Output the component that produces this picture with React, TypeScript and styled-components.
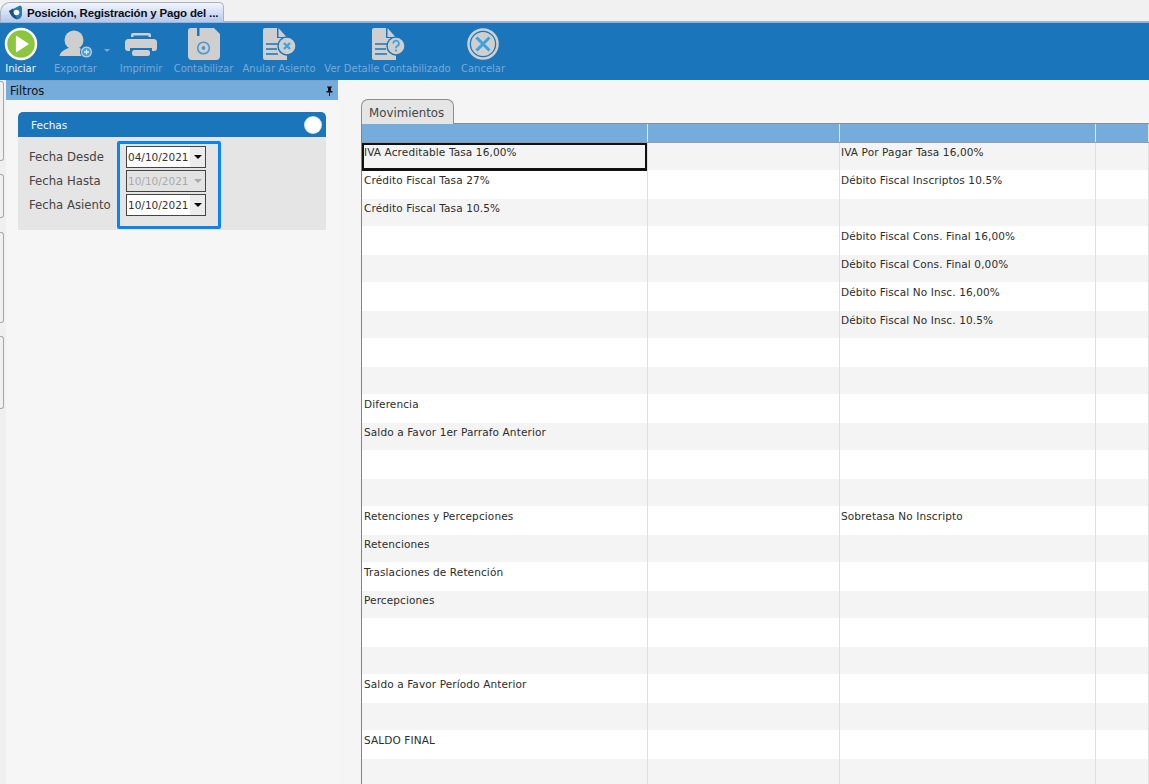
import React from "react";
import styled, { createGlobalStyle } from "styled-components";

const Global = createGlobalStyle`
  html, body { margin: 0; padding: 0; background: #f5f5f5; }
  * { box-sizing: border-box; }
  body { font-family: "DejaVu Sans", "Liberation Sans", sans-serif; }
`;

const Page = styled.div`
  width: 1149px; height: 784px; overflow: hidden; display: flex; flex-direction: column; background: #f5f5f5;
`;
const TabStrip = styled.div`
  height: 23px; flex: none; background: #f1f1f1; display: flex; align-items: flex-end;
  border-bottom: 2px solid #9fb0d6;
`;
const WindowTab = styled.div`
  width: 224px; height: 20px; margin-bottom: -1px; display: flex; align-items: center; gap: 4px; padding-left: 7px;
  background: linear-gradient(#f2f6fc, #b4c8ec);
  border: 1px solid #a9b2c2; border-bottom: none; border-radius: 10px 5px 0 0;
  svg { flex: none; }
`;
const WindowTitle = styled.span`
  font: bold 11.5px "Liberation Sans", sans-serif; color: #0c0c14; white-space: nowrap; letter-spacing: -0.17px;
`;
const Toolbar = styled.div`
  height: 57px; flex: none; background: #1b75bb; display: flex;
`;
const ToolButton = styled.div<{ $w: number; $on?: boolean }>`
  width: ${p => p.$w}px; flex: none; position: relative; display: flex; flex-direction: column; align-items: center;
  padding-top: 4px; color: ${p => (p.$on ? "#f2f6fa" : "#78aad6")}; font-size: 10px; line-height: 12px; white-space: nowrap;
  svg { display: block; margin-bottom: 2px; }
`;
const Caret = styled.span`
  position: absolute; right: 0; top: 26px; width: 0; height: 0;
  border-left: 3px solid transparent; border-right: 3px solid transparent; border-top: 3px solid #78aad6;
`;
const Body = styled.div`
  flex: 1; display: flex; min-height: 0;
`;
const SideRail = styled.div`
  width: 6px; flex: none; background: #f0f0f0; padding-top: 1px; display: flex; flex-direction: column;
`;
const RailTab = styled.div<{ $h: number; $gap: number }>`
  width: 4px; height: ${p => p.$h}px; margin-bottom: ${p => p.$gap}px;
  border: 1px solid #a8a8a8; border-left: none; border-radius: 0 3px 3px 0;
`;
const FilterPane = styled.div`
  width: 332px; flex: none; background: #f6f6f6; display: flex; flex-direction: column;
`;
const PaneHeader = styled.div`
  height: 20px; background: #75acdb; display: flex; align-items: center; justify-content: space-between;
  padding: 0 4px; font-size: 11.5px; color: #111; border-top: 1px solid #8c9fb0;
`;
const Card = styled.div`
  margin: 12px 12px 0; width: 308px;
`;
const CardHead = styled.div`
  height: 25px; background: #1b75bb; border-radius: 5px 5px 0 0; color: #f4f8fb; font-size: 10.5px;
  display: flex; align-items: center; justify-content: space-between; padding: 0 5px 0 13px;
`;
const Dot = styled.span`
  width: 16px; height: 16px; border-radius: 50%; background: #fff; box-shadow: 0 0 0 1px #d6e4f1;
`;
const CardBody = styled.div`
  height: 93px; background: #e5e5e5; display: flex; padding: 4px 0 1px 11px;
`;
const Labels = styled.div`
  width: 88px; padding-top: 7px; display: flex; flex-direction: column; gap: 6px;
`;
const FieldLabel = styled.div`
  height: 18px; line-height: 18px; font-size: 11.7px; color: #444; white-space: nowrap;
`;
const FocusBox = styled.div`
  width: 104px; height: 88px; border: 3px solid #0a84f5; border-radius: 2px; padding: 2px 0 0 6px;
  display: flex; flex-direction: column; gap: 2px;
`;
const DateInput = styled.div<{ $off?: boolean }>`
  width: 80px; height: 22px; border: 1px solid #444; display: flex; align-items: center; padding-left: 1px;
  font-size: 10.5px; background: ${p => (p.$off ? "#e3e3e3" : "#fff")}; color: ${p => (p.$off ? "#a9a9a9" : "#333")};
`;
const DateText = styled.span` flex: 1; `;
const DateArrow = styled.span<{ $off?: boolean }>`
  width: 15px; height: 20px; display: flex; align-items: center; justify-content: center;
  background: ${p => (p.$off ? "#e3e3e3" : "#ececec")};
  &::after { content: ""; border-left: 4px solid transparent; border-right: 4px solid transparent;
    border-top: 4px solid ${p => (p.$off ? "#aaa" : "#000")}; }
`;
const Main = styled.div`
  flex: 1; min-width: 0; display: flex; flex-direction: column; padding: 19px 0 0 23px;
`;
const TabBar = styled.div` height: 24px; flex: none; display: flex; `;
const SheetTab = styled.div`
  width: 93px; height: 25px; background: #e5e5e5; border: 1px solid #8d8d8d; border-bottom: none; border-radius: 7px 7px 0 0;
  padding-left: 7px; line-height: 26px; font-size: 11.8px; color: #444; position: relative; z-index: 1;
`;
const Grid = styled.div`
  flex: 1; border-top: 1px solid #8d8d8d; border-left: 1px solid #7d8590; overflow: hidden; width: 788px;
`;
const HeadRow = styled.div`
  height: 19px; display: grid; grid-template-columns: 286px 192px 256px 1fr; background: #75acdb; border-bottom: 1px solid #8d9baa;
`;
const HeadCell = styled.div` border-right: 1px solid #dfe8f0; `;
const Row = styled.div<{ $white: boolean }>`
  height: ${p => (p.$white ? 29 : 27)}px; display: grid; grid-template-columns: 286px 192px 256px 1fr;
  background: ${p => (p.$white ? "#fff" : "#f4f4f4")};
`;
const Cell = styled.div<{ $white: boolean; $selected?: boolean; $inset?: number }>`
  border-right: 1px solid #dedede; font-size: 10.5px; color: #2c2c2c; line-height: 18px;
  padding: ${p => (p.$white ? 1 : 0)}px 0 0 ${p => p.$inset ?? 2}px;
  white-space: nowrap; letter-spacing: 0.12px;
  ${p => p.$selected && `box-shadow: inset 0 2px 0 #111, inset 2px 0 0 #111, inset -2px 0 0 #111, inset 0 -3px 0 #111; height: 28px; position: relative;`}
`;

const D = "#cfcfcf";
const A = "#3ba3dd";
const Bg = "#1b75bb";

const IconPlay = () => (
  <svg width="34" height="34" viewBox="0 0 34 34">
    <circle cx="17" cy="17" r="15" fill="#8cc63f" stroke="#fff" strokeWidth="2.5" />
    <path d="M12.5 9.5 L24 17 L12.5 24.5 Z" fill="#fff" stroke="#fff" strokeWidth="1.2" strokeLinejoin="round" />
  </svg>
);
const IconUser = () => (
  <svg width="34" height="34" viewBox="0 0 34 34">
    <circle cx="15" cy="13" r="9.5" fill={D} />
    <path d="M0.5 29 C1.500 24 7 22 11 20.500 L19 20.500 C23 22 26 24 27 29 Z" fill={D} />
    <circle cx="27.500" cy="25" r="6" fill={D} stroke={Bg} strokeWidth="1" />
    <circle cx="27.500" cy="25" r="4.300" fill={A} />
    <path d="M27.500 22.500 V27.500 M25 25 H30" stroke="#dcecf7" strokeWidth="1.300" />
  </svg>
);
const IconPrinter = () => (
  <svg width="34" height="34" viewBox="0 0 34 34">
    <path d="M9 6 H25 Q27 6 27 8 V10 H24.500 V8.500 H9.500 V10 H7 V8 Q7 6 9 6 Z" fill={D} />
    <path d="M4.500 12 H29.500 Q33 12 33 15.500 V21 Q33 24 30 24 H28 V21 H6 V24 H4 Q1 24 1 21 V15.500 Q1 12 4.500 12 Z" fill={D} />
    <rect x="8" y="23" width="18" height="6" rx="2.500" fill={D} />
  </svg>
);
const IconDisk = () => (
  <svg width="34" height="34" viewBox="0 0 34 34">
    <path fillRule="evenodd" d="M4 1 H27 L33 7 V29 Q33 33 29 33 H5 Q1 33 1 29 V4 Q1 1 4 1 Z M10 1 V9 H12.500 V1 Z" fill={D} />
    <circle cx="16.500" cy="21" r="5.800" fill="none" stroke="#4f97cf" strokeWidth="1.600" />
    <circle cx="16.500" cy="21" r="1.900" fill="#4f97cf" />
  </svg>
);
const IconDoc = ({ badge }: { badge: "x" | "?" }) => (
  <svg width="34" height="34" viewBox="0 0 34 34">
    <path d="M3 1 H15 V11 H25 V33 H3 Q1 33 1 31 V3 Q1 1 3 1 Z" fill={D} />
    <path d="M16.500 1 L24.500 10 H16.500 Z" fill={D} />
    <path d="M4 17 H17 M4 22 H15 M4 27 H16" stroke={Bg} strokeWidth="1.300" />
    <circle cx="25" cy="19" r="9.700" fill={Bg} />
    <circle cx="25" cy="19" r="8.300" fill={D} />
    {badge === "x" ? (
      <path d="M22 16 L28 22 M28 16 L22 22" stroke={A} strokeWidth="2.300" />
    ) : (
      <>
        <path d="M22.300 16.500 A 2.800 2.800 0 1 1 26.200 19 Q25 19.800 25 21.300" fill="none" stroke={A} strokeWidth="1.800" />
        <circle cx="25" cy="23.500" r="1.100" fill={A} />
      </>
    )}
  </svg>
);
const IconCancel = () => (
  <svg width="34" height="34" viewBox="0 0 34 34">
    <circle cx="17" cy="17" r="14.500" fill="none" stroke={D} strokeWidth="2.500" />
    <circle cx="17" cy="17" r="12" fill={D} />
    <path d="M10.500 10.500 L23.500 23.500 M23.500 10.500 L10.500 23.500" stroke={A} strokeWidth="3" />
  </svg>
);
const AppLogo = () => (
  <svg width="15" height="15" viewBox="0 0 15 15">
    <path d="M1 6 L12 0.500 Q14 1 14 3 V10 Q13 14 9 14.500 Q4 14 1 6 Z" fill="#2a78ad" />
    <path d="M1 6 L5 3.500 Q5 10 10 14 Q4 13.500 1 6 Z" fill="#1d4f78" />
    <circle cx="8.500" cy="7.500" r="2.800" fill="#eef5fb" />
  </svg>
);
const Pin = () => (
  <svg width="9" height="10" viewBox="0 0 9 10">
    <path d="M2 0.500 H7 V1.500 H6 V5 H7.500 V6.500 H5 V10 H4 V6.500 H1.500 V5 H3 V1.500 H2 Z" fill="#111" />
  </svg>
);

const rows: [string, string][] = [
  ["IVA Acreditable Tasa 16,00%", "IVA Por Pagar Tasa 16,00%"],
  ["Crédito Fiscal Tasa 27%", "Débito Fiscal Inscriptos 10.5%"],
  ["Crédito Fiscal Tasa 10.5%", ""],
  ["", "Débito Fiscal Cons. Final 16,00%"],
  ["", "Débito Fiscal Cons. Final 0,00%"],
  ["", "Débito Fiscal No Insc. 16,00%"],
  ["", "Débito Fiscal No Insc. 10.5%"],
  ["", ""],
  ["", ""],
  ["Diferencia", ""],
  ["Saldo a Favor 1er Parrafo Anterior", ""],
  ["", ""],
  ["", ""],
  ["Retenciones y Percepciones", "Sobretasa No Inscripto"],
  ["Retenciones", ""],
  ["Traslaciones de Retención", ""],
  ["Percepciones", ""],
  ["", ""],
  ["", ""],
  ["Saldo a Favor Período Anterior", ""],
  ["", ""],
  ["SALDO FINAL", ""],
  ["", ""],
];

const fields = [
  { label: "Fecha Desde", value: "04/10/2021", off: false },
  { label: "Fecha Hasta", value: "10/10/2021", off: true },
  { label: "Fecha Asiento", value: "10/10/2021", off: false },
];

export default function App() {
  return (
    <Page>
      <Global />
      <TabStrip>
        <WindowTab>
          <AppLogo />
          <WindowTitle>Posición, Registración y Pago del ...</WindowTitle>
        </WindowTab>
      </TabStrip>
      <Toolbar>
        <ToolButton $w={41} $on><IconPlay />Iniciar</ToolButton>
        <ToolButton $w={69}><IconUser />Exportar<Caret /></ToolButton>
        <ToolButton $w={62}><IconPrinter />Imprimir</ToolButton>
        <ToolButton $w={63}><IconDisk />Contabilizar</ToolButton>
        <ToolButton $w={88}><IconDoc badge="x" />Anular Asiento</ToolButton>
        <ToolButton $w={129}><IconDoc badge="?" />Ver Detalle Contabilizado</ToolButton>
        <ToolButton $w={62}><IconCancel />Cancelar</ToolButton>
      </Toolbar>
      <Body>
        <SideRail>
          <RailTab $h={80} $gap={13} />
          <RailTab $h={44} $gap={14} />
          <RailTab $h={91} $gap={13} />
          <RailTab $h={73} $gap={0} />
        </SideRail>
        <FilterPane>
          <PaneHeader>Filtros<Pin /></PaneHeader>
          <Card>
            <CardHead>Fechas<Dot /></CardHead>
            <CardBody>
              <Labels>
                {fields.map(f => <FieldLabel key={f.label}>{f.label}</FieldLabel>)}
              </Labels>
              <FocusBox>
                {fields.map(f => (
                  <DateInput key={f.label} $off={f.off}>
                    <DateText>{f.value}</DateText>
                    <DateArrow $off={f.off} />
                  </DateInput>
                ))}
              </FocusBox>
            </CardBody>
          </Card>
        </FilterPane>
        <Main>
          <TabBar><SheetTab>Movimientos</SheetTab></TabBar>
          <Grid>
            <HeadRow><HeadCell /><HeadCell /><HeadCell /><HeadCell /></HeadRow>
            {rows.map(([a, b], i) => {
              const white = i % 2 === 1;
              return (
                <Row key={i} $white={white}>
                  <Cell $white={white} $selected={i === 0}>{a}</Cell>
                  <Cell $white={white} />
                  <Cell $white={white} $inset={1}>{b}</Cell>
                  <Cell $white={white} />
                </Row>
              );
            })}
          </Grid>
        </Main>
      </Body>
    </Page>
  );
}
